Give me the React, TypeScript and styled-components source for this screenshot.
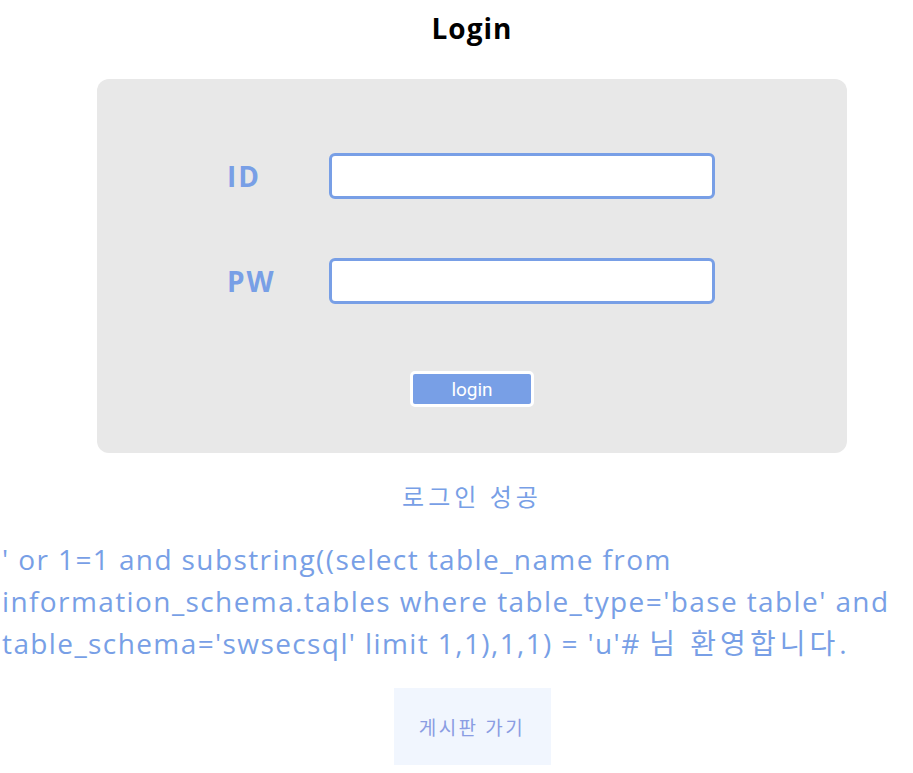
import React from 'react';
import styled, { createGlobalStyle } from 'styled-components';

const GlobalStyle = createGlobalStyle`
  body {
    margin: 0;
    background: #ffffff;
    font-family: 'Open Sans', 'Noto Sans CJK KR', sans-serif;
  }
`;

const accent = '#789fe6';

const Page = styled.div`
  width: 944px;
  display: flex;
  flex-direction: column;
  align-items: center;
`;

const Title = styled.h1`
  margin: 10px 0 0;
  font-size: 28px;
  line-height: 36px;
  font-weight: 700;
  letter-spacing: 1px;
  color: #000;
`;

const Card = styled.form`
  margin-top: 33px;
  width: 750px;
  box-sizing: border-box;
  padding: 74px 0 46px;
  background: #e8e8e8;
  border-radius: 12px;
  display: flex;
  flex-direction: column;
  align-items: center;
`;

const Row = styled.div<{ $gap?: number }>`
  display: flex;
  align-items: center;
  margin-top: ${(p) => p.$gap ?? 0}px;
`;

const Label = styled.label`
  width: 100px;
  font-size: 28px;
  font-weight: 700;
  letter-spacing: 2px;
  text-indent: -2px;
  color: ${accent};
`;

const Input = styled.input`
  width: 386px;
  height: 46px;
  box-sizing: border-box;
  border: 3px solid ${accent};
  border-radius: 6px;
  background: #fff;
  outline: none;
`;

const LoginButton = styled.button`
  margin-top: 67px;
  width: 124px;
  height: 36px;
  box-sizing: border-box;
  border: 3px solid #fff;
  border-radius: 5px;
  background: ${accent};
  color: #fff;
  font-family: Roboto, 'Liberation Sans', sans-serif;
  font-size: 19px;
  padding: 0;
`;

const Status = styled.p`
  margin: 26px 0 0;
  font-family: 'Noto Sans CJK KR', sans-serif;
  font-size: 24px;
  line-height: 34px;
  letter-spacing: 4px;
  color: ${accent};
`;

const Message = styled.p`
  align-self: stretch;
  margin: 25px 0 0;
  padding-left: 2px;
  font-size: 28px;
  line-height: 42px;
  letter-spacing: 1.4px;
  color: ${accent};
`;

const Hangul = styled.span`
  letter-spacing: 4px;
`;

const BoardButton = styled.button`
  margin-top: 24px;
  width: 157px;
  height: 77px;
  border: none;
  background: #f1f6fe;
  color: #8a9de3;
  font-family: 'Noto Sans CJK KR', sans-serif;
  font-size: 19px;
  letter-spacing: 2.5px;
`;

export default function App() {
  return (
    <>
      <GlobalStyle />
      <Page>
        <Title>Login</Title>
        <Card onSubmit={(e) => e.preventDefault()}>
          <Row>
            <Label htmlFor="id">ID</Label>
            <Input id="id" type="text" />
          </Row>
          <Row $gap={59}>
            <Label htmlFor="pw">PW</Label>
            <Input id="pw" type="password" />
          </Row>
          <LoginButton type="submit">login</LoginButton>
        </Card>
        <Status>로그인 성공</Status>
        <Message>
          ' or 1=1 and substring((select table_name from information_schema.tables where table_type='base table' and table_schema='swsecsql' limit 1,1),1,1) = 'u'# <Hangul>님 환영합니다.</Hangul>
        </Message>
        <BoardButton type="button">게시판 가기</BoardButton>
      </Page>
    </>
  );
}
